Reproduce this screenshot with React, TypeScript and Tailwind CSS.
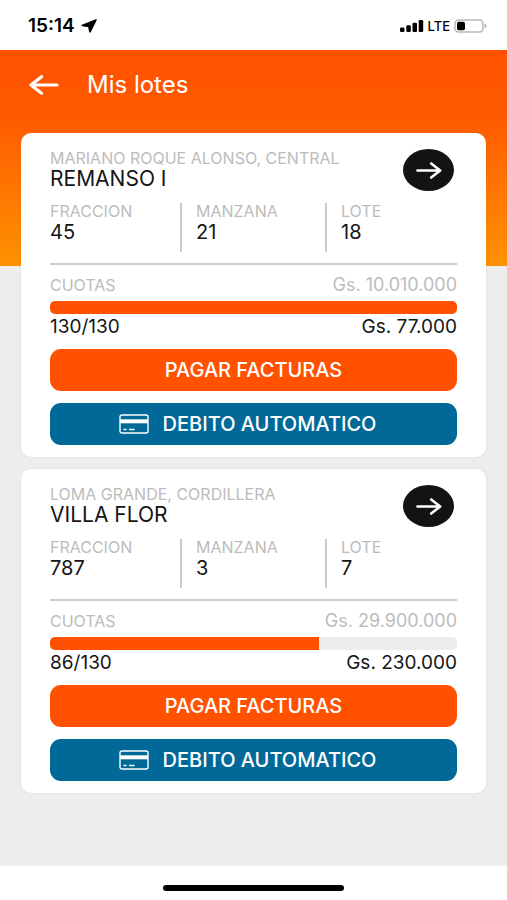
type Lot = {
  place: string;
  name: string;
  fraccion: string;
  manzana: string;
  lote: string;
  total: string;
  fee: string;
  paid: number;
  count: number;
};

const lots: Lot[] = [
  {
    place: "MARIANO ROQUE ALONSO, CENTRAL",
    name: "REMANSO I",
    fraccion: "45",
    manzana: "21",
    lote: "18",
    total: "Gs. 10.010.000",
    fee: "Gs. 77.000",
    paid: 130,
    count: 130,
  },
  {
    place: "LOMA GRANDE, CORDILLERA",
    name: "VILLA FLOR",
    fraccion: "787",
    manzana: "3",
    lote: "7",
    total: "Gs. 29.900.000",
    fee: "Gs. 230.000",
    paid: 86,
    count: 130,
  },
];

function StatusBar() {
  return (
    <div className="flex h-[50px] shrink-0 items-center justify-between bg-white pr-5 pl-7 pt-0.5 text-black">
      <div className="flex items-center gap-1.5">
        <span className="text-[19px] leading-6 font-semibold">15:14</span>
        <svg className="h-[14px] w-4" viewBox="0 0 16 14" aria-hidden="true">
          <path d="M15 1 1.200 6.500l6.600 1 1.200 5.300Z" fill="currentColor" stroke="currentColor" strokeWidth="1.600" strokeLinejoin="round" />
        </svg>
      </div>
      <div className="flex items-center gap-1">
        <svg className="h-3 w-6" viewBox="0 0 24 12" fill="currentColor" aria-hidden="true">
          <rect x="0" y="7.500" width="4.500" height="4.500" rx="1.200" />
          <rect x="6.300" y="5.300" width="4.500" height="6.700" rx="1.200" />
          <rect x="12.500" y="2.800" width="4.500" height="9.200" rx="1.200" />
          <rect x="18.700" y="0" width="4.500" height="12" rx="1.200" />
        </svg>
        <span className="text-[13px] leading-4 font-medium">LTE</span>
        <svg className="h-[14px] w-[33px]" viewBox="0 0 33 14" aria-hidden="true">
          <rect x="1" y="1" width="28" height="12" rx="3.500" fill="none" stroke="#b9b9b9" strokeWidth="1.500" />
          <rect x="3" y="2.800" width="8" height="8.400" rx="1.800" fill="#000" />
          <path d="M30.700 4.800c2.200.6 2.200 3.800 0 4.400Z" fill="#aaa" />
        </svg>
      </div>
    </div>
  );
}

function Field({ label, value, className }: { label: string; value: string; className: string }) {
  return (
    <div className={className}>
      <dt className="text-[16px] leading-4 text-[#bcbcbc]">{label}</dt>
      <dd className="text-[20px] leading-[26px] text-[#151515]">{value}</dd>
    </div>
  );
}

function LotCard({ lot }: { lot: Lot }) {
  return (
    <article className="rounded-[10px] bg-white px-[29px] pt-4 pb-3 shadow-[0_0_3px_rgba(0,0,0,0.06)]">
      <div className="flex items-start justify-between">
        <div>
          <p className="text-[16px] leading-[18px] text-[#bcbcbc]">{lot.place}</p>
          <h2 className="text-[21px] leading-6 text-[#151515]">{lot.name}</h2>
        </div>
        <button
          type="button"
          aria-label={`Ver ${lot.name}`}
          className="mr-[3px] flex h-[42px] w-[51px] items-center justify-center rounded-[50%] bg-[#131313] text-white"
        >
          <svg className="h-[18px] w-[26px]" viewBox="0 0 26 18" fill="none" stroke="currentColor" strokeWidth="2.600" strokeLinecap="round" strokeLinejoin="round" aria-hidden="true">
            <path d="M1.500 9.500H24M15.200 2.500l9 7-9 7" />
          </svg>
        </button>
      </div>
      <dl className="mt-3 grid h-[49px] grid-cols-[132fr_145fr_130fr]">
        <Field label="FRACCION" value={lot.fraccion} className="border-r-2 border-[#cbcbcb]" />
        <Field label="MANZANA" value={lot.manzana} className="border-r-2 border-[#cbcbcb] pl-3.5" />
        <Field label="LOTE" value={lot.lote} className="pl-3.5" />
      </dl>
      <hr className="mt-[11px] border-t-2 border-[#cbcbcb]" />
      <div className="mt-2.5 flex justify-between leading-5 text-[#bcbcbc]">
        <span className="text-[16px]">CUOTAS</span>
        <span className="text-[18px]">{lot.total}</span>
      </div>
      <div
        role="progressbar"
        aria-label="Cuotas pagadas"
        aria-valuenow={lot.paid}
        aria-valuemax={lot.count}
        className="mt-1.5 h-[13px] overflow-hidden rounded-[5px] bg-[#ececec]"
      >
        <div className="h-full bg-[#ff5100]" style={{ width: `${(lot.paid / lot.count) * 100}%` }} />
      </div>
      <div className="mt-[3px] flex justify-between text-[19px] leading-5 text-[#151515]">
        <span>{lot.paid}/{lot.count}</span>
        <span>{lot.fee}</span>
      </div>
      <button type="button" className="mt-3 flex h-[42px] w-full items-center justify-center rounded-[11px] bg-[#ff5100] text-[20px] leading-6 font-medium text-white">
        PAGAR FACTURAS
      </button>
      <button type="button" className="mt-3 flex h-[42px] w-full items-center justify-center gap-3.5 rounded-[11px] bg-[#006998] pr-3 text-[20px] leading-6 font-medium text-white">
        <svg className="h-5 w-[30px]" viewBox="0 0 30 20" fill="none" stroke="currentColor" aria-hidden="true">
          <rect x="1" y="1" width="28" height="18" rx="2" strokeWidth="1.400" />
          <path d="M1 7.300h28" strokeWidth="4" />
          <path d="M4.500 15.500h3M10 15.500h5.500" strokeWidth="1.400" />
        </svg>
        DEBITO AUTOMATICO
      </button>
    </article>
  );
}

export default function App() {
  return (
    <div className="flex min-h-screen flex-col bg-white font-['Inter','Roboto',sans-serif]">
      <StatusBar />
      <div className="grow bg-[#ededed] bg-[linear-gradient(#ff5200_0px,#ff5800_60px,#ff9200_216px,#ededed_216px)] px-[21px] pb-6">
        <header className="flex h-[70px] items-center gap-7 px-2 text-white">
          <button type="button" aria-label="Volver">
            <svg className="h-5 w-[30px]" viewBox="0 0 30 20" fill="none" stroke="currentColor" strokeWidth="3.200" strokeLinecap="round" strokeLinejoin="round" aria-hidden="true">
              <path d="M28 10H2M12.500 1.800 2 10l10.500 8.200" />
            </svg>
          </button>
          <h1 className="text-[24px] leading-7">Mis lotes</h1>
        </header>
        <main className="flex flex-col gap-3 pt-[13px]">
          {lots.map((lot) => (
            <LotCard key={lot.name} lot={lot} />
          ))}
        </main>
      </div>
      <footer className="flex h-[34px] shrink-0 items-center justify-center bg-white pt-2.5">
        <div className="h-1.5 w-[181px] rounded-full bg-black" />
      </footer>
    </div>
  );
}
